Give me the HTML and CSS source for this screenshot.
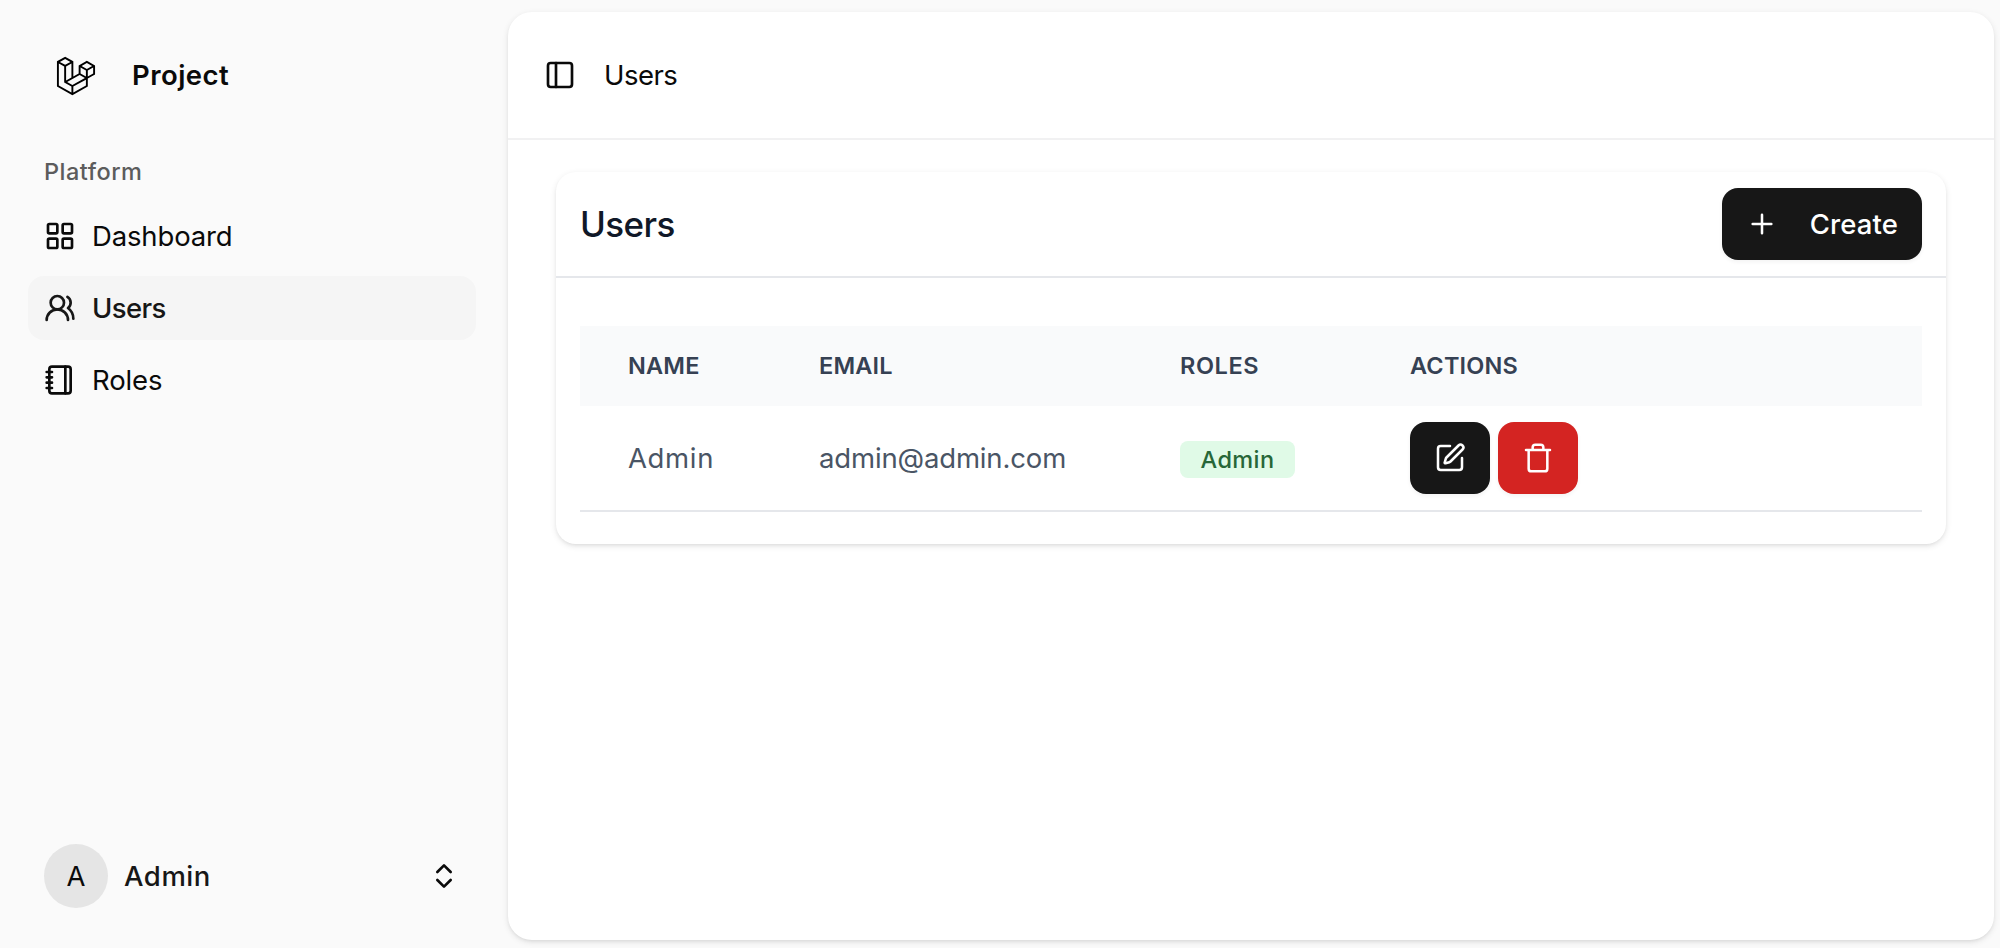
FILE: index.html
```html
<!DOCTYPE html>
<html lang="en">
<head>
<meta charset="utf-8">
<title>Users</title>
<link rel="stylesheet" href="styles.css">
</head>
<body>
<div class="app">
  <aside class="sidebar">
    <div class="brand">
      <svg class="brand-logo" viewBox="0 0 40 42"><path fill-rule="evenodd" clip-rule="evenodd" d="M17.2 5.633 8.6.855 0 5.633v26.51l16.2 9 16.2-9v-8.442l7.6-4.223V9.856l-8.6-4.777-8.6 4.777V18.3l-5.6 3.111V5.633ZM38 18.301l-5.6 3.11v-6.157l5.6-3.11V18.3Zm-1.06-7.856-5.54 3.078-5.54-3.079 5.54-3.078 5.54 3.079ZM24.8 18.3v-6.157l5.6 3.111v6.158L24.8 18.3Zm-1 1.732 5.54 3.078-13.14 7.302-5.54-3.078 13.14-7.3v-.002Zm-16.2 7.89 7.6 4.222V38.3L2 30.966V7.92l5.6 3.111v16.892ZM8.6 9.3 3.06 6.222 8.6 3.143l5.54 3.08L8.6 9.3Zm21.8 15.51-13.2 7.334V38.3l13.2-7.334v-6.156ZM9.6 11.034l5.6-3.11v14.6l-5.6 3.11v-14.6Z"/></svg>
      <span class="brand-name">Project</span>
    </div>
    <div class="group-label">Platform</div>
    <nav class="nav">
      <a class="nav-item">
        <svg class="icon" viewBox="0 0 24 24"><rect width="7" height="7" x="3" y="3" rx="1"/><rect width="7" height="7" x="14" y="3" rx="1"/><rect width="7" height="7" x="14" y="14" rx="1"/><rect width="7" height="7" x="3" y="14" rx="1"/></svg>
        <span>Dashboard</span>
      </a>
      <a class="nav-item active">
        <svg class="icon" viewBox="0 0 24 24"><path d="M18 21a8 8 0 0 0-16 0"/><circle cx="10" cy="8" r="5"/><path d="M22 20c0-3.37-2-6.5-4-8a5 5 0 0 0-.45-8.3"/></svg>
        <span>Users</span>
      </a>
      <a class="nav-item">
        <svg class="icon" viewBox="0 0 24 24"><path d="M2 6h4M2 10h4M2 14h4M2 18h4"/><rect width="16" height="20" x="4" y="2" rx="2"/><path d="M16 2v20"/></svg>
        <span>Roles</span>
      </a>
    </nav>
    <div class="account">
      <span class="avatar">A</span>
      <span class="account-name">Admin</span>
      <svg class="icon" viewBox="0 0 24 24"><path d="m7 15 5 5 5-5M7 9l5-5 5 5"/></svg>
    </div>
  </aside>
  <main class="panel">
    <header class="topbar">
      <svg class="icon" viewBox="0 0 24 24"><rect width="18" height="18" x="3" y="3" rx="2"/><path d="M9 3v18"/></svg>
      <span class="crumb">Users</span>
    </header>
    <section class="card">
      <div class="card-head">
        <h1 class="card-title">Users</h1>
        <button class="btn btn-create">
          <svg class="icon icon-light" viewBox="0 0 24 24"><path d="M5 12h14M12 5v14"/></svg>
          <span>Create</span>
        </button>
      </div>
      <div class="card-body">
        <div class="row row-head">
          <span>NAME</span>
          <span>EMAIL</span>
          <span class="th-roles">ROLES</span>
          <span>ACTIONS</span>
        </div>
        <div class="row row-data">
          <span class="td-name">Admin</span>
          <span class="td-email">admin@admin.com</span>
          <span class="cell"><span class="badge">Admin</span></span>
          <span class="actions">
            <button class="btn btn-icon"><svg class="icon icon-light" viewBox="0 0 24 24"><path d="M12 3H5a2 2 0 0 0-2 2v14a2 2 0 0 0 2 2h14a2 2 0 0 0 2-2v-7"/><path d="M18.375 2.625a1 1 0 0 1 3 3l-9.013 9.014a2 2 0 0 1-.853.505l-2.873.84a.5.5 0 0 1-.62-.62l.84-2.873a2 2 0 0 1 .506-.852z"/></svg></button>
            <button class="btn btn-icon btn-danger"><svg class="icon icon-light" viewBox="0 0 24 24"><path d="M3 6h18M19 6v14a2 2 0 0 1-2 2H7a2 2 0 0 1-2-2V6M8 6V4a2 2 0 0 1 2-2h4a2 2 0 0 1 2 2v2"/></svg></button>
          </span>
        </div>
      </div>
    </section>
  </main>
</div>
</body>
</html>
```
FILE: styles.css
```css
* { box-sizing: border-box; }
body {
  margin: 0;
  background: #fafafa;
  color: #0a0a0a;
  font-family: Inter, "Liberation Sans", sans-serif;
  font-size: 27.5px;
  line-height: 40px;
}
.app { display: flex; height: 948px; padding: 12px 6px 8px 0; }
.icon {
  width: 32px; height: 32px; flex: none;
  fill: none; stroke: currentColor; stroke-width: 2;
  stroke-linecap: round; stroke-linejoin: round;
}
.icon-light { stroke-width: 1.9; }

.sidebar { width: 508px; display: flex; flex-direction: column; padding: 16px 32px 32px 28px; }
.brand { display: flex; align-items: center; height: 96px; padding-left: 28px; }
.brand-logo { width: 40px; height: 40px; }
.brand-name { margin-left: 36px; padding-bottom: 2px; font-weight: 600; letter-spacing: .45px; }
.group-label { height: 64px; margin-top: 16px; padding-left: 16px; font-size: 23.5px; font-weight: 500; line-height: 64px; letter-spacing: .5px; color: #5c5c5c; }
.nav { display: flex; flex-direction: column; gap: 8px; }
.nav-item { display: flex; align-items: center; gap: 16px; height: 64px; padding: 0 16px; border-radius: 16px; letter-spacing: -.15px; }
.nav-item.active { background: #f5f5f5; color: #171717; font-weight: 500; letter-spacing: -.6px; }
.account { display: flex; align-items: center; height: 64px; margin-top: auto; padding: 0 16px; }
.avatar { width: 64px; height: 64px; border-radius: 50%; background: #e5e5e5; text-align: center; line-height: 64px; }
.account-name { flex: 1; margin-left: 16px; font-weight: 500; letter-spacing: .55px; color: #171717; }

.panel { flex: 1; border-radius: 24px; background: #fff; box-shadow: 0 2px 6px rgba(0,0,0,.1), 0 2px 4px -2px rgba(0,0,0,.1); }
.topbar { display: flex; align-items: center; gap: 28px; height: 128px; padding: 0 36px; border-bottom: 2px solid #f1f1f2; }
.crumb { letter-spacing: -.5px; }
.card { margin: 32px 48px 0; border-radius: 20px; box-shadow: 0 2px 6px rgba(0,0,0,.1), 0 2px 4px -2px rgba(0,0,0,.1); }
.card-head { display: flex; align-items: center; justify-content: space-between; height: 106px; padding: 0 24px; border-bottom: 2px solid #e5e7eb; }
.card-title { margin: 0; font-size: 35px; font-weight: 500; letter-spacing: -.6px; color: #101828; }
.btn {
  display: flex; align-items: center; height: 72px; padding: 0; border: 0; border-radius: 16px;
  background: #171717; color: #fff; font: inherit; font-weight: 500;
  box-shadow: 0 2px 4px rgba(0,0,0,.05);
}
.btn-create { width: 200px; padding: 0 24px; justify-content: space-between; letter-spacing: .1px; }
.card-body { padding: 48px 24px 32px; }
.row { display: grid; grid-template-columns: 191px 361px 230px 1fr; align-items: center; padding-left: 48px; }
.row-head { height: 80px; background: #f9fafb; font-size: 23.5px; font-weight: 600; letter-spacing: .2px; color: #364153; }
.th-roles { letter-spacing: .6px; }
.row-data { height: 106px; border-bottom: 2px solid #e5e7eb; color: #4a5565; }
.td-name { letter-spacing: .65px; }
.td-email { letter-spacing: -.15px; }
.cell { display: flex; }
.badge { width: 115px; height: 37px; margin-top: 2px; border-radius: 8px; background: #e0fae7; color: #276738; font-size: 23.5px; font-weight: 500; line-height: 37px; letter-spacing: .4px; text-align: center; }
.actions { display: flex; gap: 8px; }
.btn-icon { width: 80px; justify-content: center; }
.btn-danger { background: #d42422; }
```
